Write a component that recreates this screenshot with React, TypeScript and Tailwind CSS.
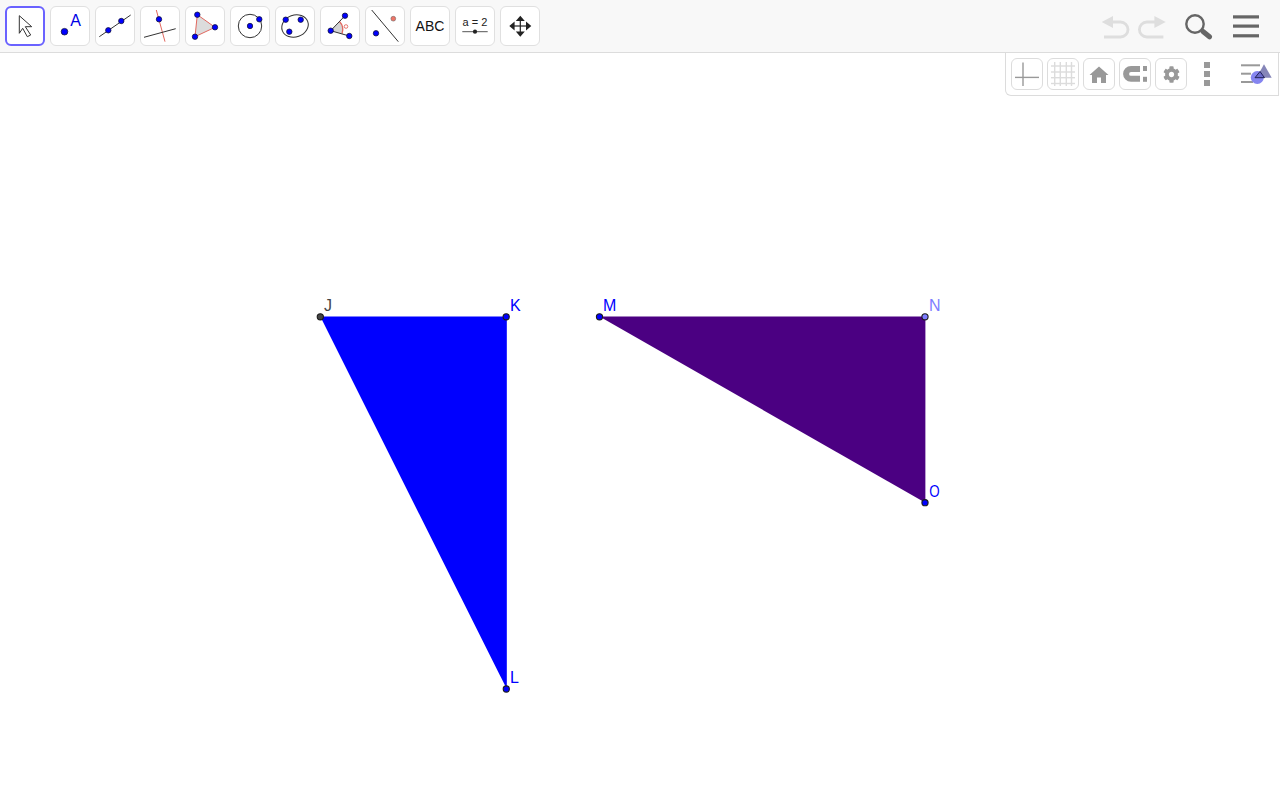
import { FaCog } from "react-icons/fa";
import type { ReactNode } from "react";

const B = "#0000e6";

function Dot({ x, y, r = 2.7, fill = "#0000ff" }: { x: number; y: number; r?: number; fill?: string }) {
  return <circle cx={x} cy={y} r={r} fill={fill} stroke="#14143c" strokeWidth={0.8} />;
}

function CanvasDot({ x, y, fill = "#0000ff" }: { x: number; y: number; fill?: string }) {
  return <circle cx={x} cy={y} r={3.1} fill={fill} stroke="#1a1a1a" strokeWidth={1.1} />;
}

function ToolButton({ children, active }: { children: ReactNode; active?: boolean }) {
  return (
    <div
      className={
        active
          ? "box-border flex h-10 w-10 items-center justify-center rounded-md border-2 border-[#6a62ff] bg-white"
          : "box-border flex h-10 w-10 items-center justify-center rounded-md border border-[#e0e0e0] bg-white"
      }
    >
      {children}
    </div>
  );
}

function ToolIcon({ children }: { children: ReactNode }) {
  return (
    <svg viewBox="1 1 38 38" className="block h-[38px] w-[38px] shrink-0">
      {children}
    </svg>
  );
}

function BarButton({ children }: { children: ReactNode }) {
  return (
    <div className="box-border flex h-8 w-8 items-center justify-center rounded-md border border-[#dcdcdc] bg-white">
      {children}
    </div>
  );
}

function BarIcon({ children }: { children: ReactNode }) {
  return (
    <svg viewBox="1 1 30 30" className="block h-[30px] w-[30px]">
      {children}
    </svg>
  );
}

function UndoArrow({ mirror }: { mirror?: boolean }) {
  return (
    <svg viewBox="0 0 30 30" className="block h-[30px] w-[30px]">
      <g transform={mirror ? "translate(30.4 0) scale(-1 1)" : undefined}>
        <path d="M1.7 11 L13 5 L13 17 Z" fill="#dedede" />
        <path d="M12 11 H20.5 A7.5 7.5 0 0 1 20.5 26 H4" fill="none" stroke="#dedede" strokeWidth={2.8} />
      </g>
    </svg>
  );
}

type Label = { t: string; x: number; y: number; c: string; w?: number };
const labels: Label[] = [
  { t: "J", x: 324, y: 311, c: "#444444" },
  { t: "K", x: 510, y: 311, c: "#0000ff" },
  { t: "L", x: 510, y: 683, c: "#0000ff" },
  { t: "M", x: 603, y: 311, c: "#0000ff" },
  { t: "N", x: 929, y: 311, c: "#7d7dff" },
  { t: "O", x: 929.3, y: 497, c: "#0000ff", w: 10.4 },
];

export default function App() {
  return (
    <div className="flex h-[802px] w-[1280px] flex-col overflow-hidden bg-white font-['Liberation_Sans',sans-serif]">
      <header className="box-border flex h-[53px] shrink-0 items-center border-b border-[#dcdcdc] bg-[#f8f8f8] pl-[5px] pr-[19px]">
        <div className="flex gap-[5px]">
          <ToolButton active>
            <svg viewBox="2 2 36 36" className="block h-9 w-9">
              <path
                d="M14.3 9.7 L26.7 20.7 L20.3 20.7 L25.7 29 L22.3 30.7 L17.7 22.3 L14.3 27.3 Z"
                fill="#fff"
                stroke="#333"
                strokeWidth={1}
              />
            </svg>
          </ToolButton>
          <ToolButton>
            <ToolIcon>
              <Dot x={14.5} y={25.7} r={3.3} />
              <text x={20.3} y={19.5} fontSize={16} fill={B}>A</text>
            </ToolIcon>
          </ToolButton>
          <ToolButton>
            <ToolIcon>
              <line x1={4.3} y1={30.7} x2={35.7} y2={9} stroke="#333" strokeWidth={1} />
              <Dot x={13.3} y={24.3} />
              <Dot x={26.3} y={15} />
            </ToolIcon>
          </ToolButton>
          <ToolButton>
            <ToolIcon>
              <line x1={16.3} y1={4} x2={25} y2={35.7} stroke="#e2685f" strokeWidth={1} />
              <line x1={4} y1={31.3} x2={35.7} y2={22.7} stroke="#333" strokeWidth={1} />
              <Dot x={19} y={13.3} />
            </ToolIcon>
          </ToolButton>
          <ToolButton>
            <ToolIcon>
              <polygon points="12.3,8.7 30,21.3 10,30.7" fill="#dcdcdc" stroke="#e2685f" strokeWidth={1} />
              <Dot x={12.3} y={8.7} />
              <Dot x={30} y={21.3} />
              <Dot x={10} y={30.7} />
            </ToolIcon>
          </ToolButton>
          <ToolButton>
            <ToolIcon>
              <circle cx={20} cy={20} r={11.7} fill="none" stroke="#333" strokeWidth={1} />
              <Dot x={20} y={20} />
              <Dot x={29.3} y={13.3} />
            </ToolIcon>
          </ToolButton>
          <ToolButton>
            <ToolIcon>
              <ellipse cx={20} cy={20} rx={13.5} ry={11} transform="rotate(-20 20 20)" fill="none" stroke="#333" strokeWidth={1} />
              <Dot x={10.7} y={13.7} />
              <Dot x={25.7} y={13.7} />
              <Dot x={14.3} y={25.7} />
            </ToolIcon>
          </ToolButton>
          <ToolButton>
            <ToolIcon>
              <path d="M10.7 24.7 L19.5 15.5 A12 12 0 0 1 22 27.8 Z" fill="#d4d4d4" stroke="none" />
              <path d="M19.5 15.5 A12 12 0 0 1 22 27.8" fill="none" stroke="#e2685f" strokeWidth={1.3} />
              <line x1={10.7} y1={24.7} x2={25} y2={9.7} stroke="#333" strokeWidth={1} />
              <line x1={10.7} y1={24.7} x2={29.3} y2={30} stroke="#333" strokeWidth={1} />
              <circle cx={26} cy={20.5} r={1.8} fill="none" stroke="#e2685f" strokeWidth={0.9} />
              <Dot x={10.7} y={24.7} />
              <Dot x={25} y={9.7} />
              <Dot x={29.3} y={30} />
            </ToolIcon>
          </ToolButton>
          <ToolButton>
            <ToolIcon>
              <line x1={6.7} y1={4} x2={33.3} y2={35.7} stroke="#333" strokeWidth={1} />
              <Dot x={11} y={27.3} />
              <circle cx={28.3} cy={12.7} r={2.4} fill="#ef7567" stroke="#555" strokeWidth={0.5} />
            </ToolIcon>
          </ToolButton>
          <ToolButton>
            <span className="text-[14px] leading-none text-[#111]">ABC</span>
          </ToolButton>
          <ToolButton>
            <ToolIcon>
              <text x={20} y={19.5} fontSize={11} textAnchor="middle" fill="#222">a = 2</text>
              <line x1={7.3} y1={25.7} x2={32.7} y2={25.7} stroke="#555" strokeWidth={1} />
              <circle cx={20} cy={25.7} r={2.1} fill="#222" />
            </ToolIcon>
          </ToolButton>
          <ToolButton>
            <ToolIcon>
              <line x1={12} y1={20} x2={28} y2={20} stroke="#222" strokeWidth={1.2} />
              <line x1={20.3} y1={12} x2={20.3} y2={28} stroke="#222" strokeWidth={1.2} />
              <path d="M20.3 9.7 L24.8 15 H15.8 Z M20.3 30.7 L24.8 25.4 H15.8 Z M9.3 20 L14.6 15.5 V24.5 Z M31.3 20 L26 15.5 V24.5 Z" fill="#222" />
            </ToolIcon>
          </ToolButton>
        </div>
        <div className="ml-auto flex items-center">
          <UndoArrow />
          <div className="ml-[7px]">
            <UndoArrow mirror />
          </div>
          <svg viewBox="0 0 30 30" className="ml-4 block h-[30px] w-[30px]">
            <circle cx={12} cy={13} r={8.7} fill="none" stroke="#666" strokeWidth={2.4} />
            <line x1={18} y1={19} x2={20} y2={21} stroke="#666" strokeWidth={2} />
            <line x1={20} y1={20.5} x2={26.5} y2={25.8} stroke="#666" strokeWidth={5} strokeLinecap="round" />
          </svg>
          <svg viewBox="0 0 30 30" className="ml-[18px] block h-[30px] w-[30px]">
            <rect x={2} y={4.3} width={26} height={3.2} fill="#666" />
            <rect x={2} y={13.5} width={26} height={3.2} fill="#666" />
            <rect x={2} y={23.2} width={26} height={3.2} fill="#666" />
          </svg>
        </div>
      </header>

      <main className="relative flex-1">
        <svg viewBox="0 53 1280 749" className="block h-full w-full">
          <polygon points="320.3,316.6 506.8,316.6 506.8,689" fill="#0000ff" />
          <polygon points="599.5,316.6 925.4,316.6 925.4,502.7" fill="#4b0082" />
          <CanvasDot x={320.3} y={316.8} fill="#444444" />
          <CanvasDot x={506.2} y={316.8} />
          <CanvasDot x={506.3} y={689} />
          <CanvasDot x={599.5} y={316.8} />
          <CanvasDot x={925} y={316.8} fill="#7d7dff" />
          <CanvasDot x={925} y={502.7} />
          {labels.map((l) => (
            <text key={l.t} x={l.x} y={l.y} fontSize={16} fill={l.c} textLength={l.w} lengthAdjust={l.w ? "spacingAndGlyphs" : undefined}>
              {l.t}
            </text>
          ))}
        </svg>

        <div className="absolute right-[1px] top-0 box-border flex h-[43px] w-[274px] items-start gap-1 rounded-bl-md border-b border-l border-r border-[#dcdcdc] bg-white pl-[5px] pt-[5px]">
          <BarButton>
            <BarIcon>
              <line x1={4} y1={19.4} x2={28} y2={19.4} stroke="#999" strokeWidth={1.4} />
              <line x1={12} y1={4.5} x2={12} y2={28} stroke="#999" strokeWidth={1.4} />
            </BarIcon>
          </BarButton>
          <BarButton>
            <BarIcon>
              <g stroke="#dcdcdc" strokeWidth={1.4}>
                <line x1={7.7} y1={4} x2={7.7} y2={28} />
                <line x1={13.3} y1={4} x2={13.3} y2={28} />
                <line x1={19.3} y1={4} x2={19.3} y2={28} />
                <line x1={24.5} y1={4} x2={24.5} y2={28} />
                <line x1={4} y1={8} x2={28} y2={8} />
                <line x1={4} y1={14} x2={28} y2={14} />
                <line x1={4} y1={19.7} x2={28} y2={19.7} />
                <line x1={4} y1={25.5} x2={28} y2={25.5} />
              </g>
            </BarIcon>
          </BarButton>
          <BarButton>
            <BarIcon>
              <path d="M16 8.5 L25.5 17 H23 V25 H18 V19.5 H14 V25 H9 V17 H6.5 Z" fill="#999" />
            </BarIcon>
          </BarButton>
          <BarButton>
            <BarIcon>
              <path d="M21 11 H12 A4.9 4.9 0 0 0 12 20.8 H21" fill="none" stroke="#999" strokeWidth={6} />
              <rect x={24} y={8} width={4} height={5} fill="#999" />
              <rect x={24} y={18.8} width={4} height={5} fill="#999" />
            </BarIcon>
          </BarButton>
          <BarButton>
            <FaCog size={17} color="#999" />
          </BarButton>
          <svg viewBox="0 0 32 32" className="block h-8 w-8">
            <rect x={13} y={4} width={6} height={6} fill="#999" />
            <rect x={13} y={13} width={6} height={6} fill="#999" />
            <rect x={13} y={22} width={6} height={6} fill="#999" />
          </svg>
          <svg viewBox="0 0 40 32" className="ml-2 block h-8 w-10">
            <rect x={6} y={6.3} width={19} height={2} fill="#999" />
            <rect x={6} y={14.7} width={10} height={2} fill="#999" />
            <rect x={6} y={23} width={12} height={2} fill="#999" />
            <polygon points="29,6.3 36.7,19.7 21.5,19.7" fill="#8585b8" />
            <circle cx={22.3} cy={19.5} r={6.5} fill="#8585f0" />
            <polygon points="25,13.5 29.5,19.7 20,19.7" fill="#6a6acb" stroke="#222255" strokeWidth={1} />
          </svg>
        </div>
      </main>
    </div>
  );
}
